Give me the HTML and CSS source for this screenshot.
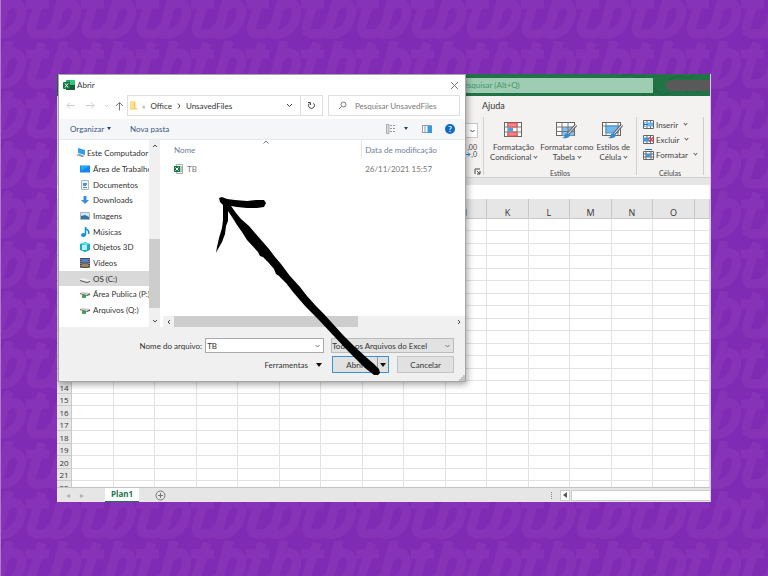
FILE: index.html
```html
<!DOCTYPE html>
<html lang="pt-BR">
<head>
<meta charset="utf-8">
<title>Abrir</title>
<link rel="stylesheet" href="styles.css">
</head>
<body>
<svg class="wallpaper" aria-hidden="true">
  <defs>
    <pattern id="tb" width="55" height="50" patternUnits="userSpaceOnUse" patternTransform="translate(24 -9)">
      <g fill="none" stroke="#8733b7" stroke-width="9">
        <path d="M17 2 L7 34 Q4 44 15 43 Q26 43 30 34 L39 0 M1 13 H24 M33 19 Q42 9 48 13 Q55 19 48 33 Q41 45 28 43 Q24 42 27 35"/>
        <path d="M-22 19 Q-13 9 -7 13 Q0 19 -7 33 Q-14 45 -27 43"/>
      </g>
    </pattern>
  </defs>
  <rect width="100%" height="100%" fill="url(#tb)"/>
</svg>
<main class="app">
  <header class="titlebar">
    <svg class="swirl" width="120" height="22" viewBox="0 0 120 22" fill="none" stroke="#1d663c" aria-hidden="true"><path d="M32 2q8-3 13 1h10M54 22q-2-7 5-9 6 0 9 6 4 4 12 0M62 22q1-5 7-5M78 6q8-5 15-3t12-3M96 18q6-4 14 0"/></svg>
    <input class="app-search" type="text" aria-label="Pesquisar" value="Pesquisar (Alt+Q)">
    <span class="account"></span>
  </header>
  <nav class="tabs"><a href="#ajuda">Ajuda</a></nav>
  <section class="ribbon">
    <div class="group number">
      <button class="combo" aria-label="Formato de número"><svg width="5" height="4" viewBox="0 0 5 4"><path d="M.5 1l2 2 2-2" class="dark"/></svg></button>
      <button class="decimals" aria-label="Diminuir casas decimais"><span>,00</span><span><svg width="6" height="5" viewBox="0 0 6 5"><path d="M0 2.500h5M3 .5l2 2-2 2" fill="none" stroke="#2184cf"/></svg>,0</span></button>
      <button class="launcher" aria-label="Mais opções"><svg width="7" height="7" viewBox="0 0 7 7"><path d="M1 6V1h5M3 3l3 3M6 3v3H3" class="dark"/></svg></button>
    </div>
    <div class="group styles">
      <div class="big-buttons">
        <button class="big"><svg width="19" height="18" viewBox="0 0 19 18"><rect x=".5" y="1.500" width="17" height="14" fill="#fff" stroke="#666"/><path d="M.5 6h17M.5 11h17M4 1.500v14M13 1.500v14" stroke="#777"/><path d="M4 2h9v4H4zM4 11h9v4H4z" fill="#ff8585" stroke="#e34d4d"/><path d="M4 6.500h5v4H4z" fill="#4aa3e8"/></svg><span>Formatação<br>Condicional <i></i></span></button>
        <button class="big"><svg width="22" height="18" viewBox="0 0 22 18"><rect x=".5" y="1.500" width="18" height="13" fill="#fff" stroke="#666"/><path d="M6 6h12v8.500H6z" fill="#83c0f1"/><path d="M.5 6h18M.5 10.500h18M6 1.500v13M12 1.500v13" stroke="#777"/><path d="M20 4l-8 9" stroke="#666" stroke-width="3"/><path d="M20 4l-8 9" stroke="#fff"/><path d="M6 17q3-1 3-4l3-1 2 2q-1 4-8 3z" fill="#318ad2"/></svg><span>Formatar como<br>Tabela <i></i></span></button>
        <button class="big"><svg width="22" height="18" viewBox="0 0 22 18"><rect x=".5" y="1.500" width="18" height="13" fill="#fff" stroke="#666"/><path d="M.5 5h18M4 1.500v13M16 1.500v13" stroke="#777"/><path d="M4 5h12v7H4z" fill="#72b7ed" stroke="#4793cf"/><path d="M20 4l-8 9" stroke="#666" stroke-width="3"/><path d="M20 4l-8 9" stroke="#fff"/><path d="M6 17q3-1 3-4l3-1 2 2q-1 4-8 3z" fill="#318ad2"/></svg><span>Estilos de<br>Célula <i></i></span></button>
      </div>
      <p>Estilos</p>
    </div>
    <div class="group cells">
      <button class="small"><svg width="11" height="11" viewBox="0 0 11 11"><path d="M.5 1.500h10v8H.5zM4 1.500v8M7.500 1.500v8" fill="#fff" stroke="#666"/><path d="M4 3.500h6v4H4z" fill="#67b4ef"/><path d="M5 5.500H0M2.500 3L0 5.500 2.500 8" fill="none" stroke="#1878c0"/></svg>Inserir <i></i></button>
      <button class="small"><svg width="11" height="11" viewBox="0 0 11 11"><path d="M.5 1.500h10v8H.5zM4 1.500v8M7.500 1.500v8" fill="#fff" stroke="#666"/><path d="M0 3.500h6v4H0z" fill="#3d99df"/><path d="M6 3.500l4 4M10 3.500l-4 4" stroke="#e83b3b" stroke-width="1.500"/></svg>Excluir <i></i></button>
      <button class="small"><svg width="11" height="11" viewBox="0 0 11 11"><path d="M.5 2.500h10v8H.5zM3 2.500v8M8 2.500v8M.5 5h10M.5 8h10" fill="#fff" stroke="#666"/><path d="M3 5h5v3H3z" fill="#3d99df"/><path d="M2 .5h7" stroke="#1878c0"/></svg>Formatar <i></i></button>
      <p>Células</p>
    </div>
  </section>
  <div class="formula"></div>
  <section class="sheet">
    <table>
      <colgroup><col class="head"><col class="c" span="15"><col></colgroup>
      <thead><tr><th></th><th>A</th><th>B</th><th>C</th><th>D</th><th>E</th><th>F</th><th>G</th><th>H</th><th>I</th><th>J</th><th>K</th><th>L</th><th>M</th><th>N</th><th>O</th><th></th></tr></thead>
      <tbody id="rows"></tbody>
    </table>
  </section>
  <footer class="sheetbar">
    <button class="step" aria-label="Anterior">◂</button>
    <button class="step" aria-label="Próxima">▸</button>
    <a class="sheet-tab" href="#plan1">Plan1</a>
    <button class="add" aria-label="Nova planilha"><svg width="11" height="11" viewBox="0 0 11 11"><circle cx="5.500" cy="5.500" r="4.500" class="line"/><path d="M5.500 3v5M3 5.500h5" class="line"/></svg></button>
    <div class="hscroll"><span class="grip"></span><button aria-label="Rolar"><svg width="4" height="6" viewBox="0 0 4 6"><path d="M4 0v6L0 3z" fill="#555"/></svg></button><span class="track"></span></div>
  </footer>

  <section class="dialog" role="dialog" aria-label="Abrir">
    <header class="dlg-title">
      <svg width="12" height="11" viewBox="0 0 12 11"><rect x="3" width="9" height="10" rx="1" fill="#21a366"/><path d="M7 0h5v5H7z" fill="#33c481"/><path d="M3 5h9v5H3z" fill="#185c37"/><rect y="2" width="7" height="7" rx="1" fill="#107c41"/><path d="M2 3.500l3 4M5 3.500l-3 4" stroke="#fff"/></svg>
      <span>Abrir</span>
      <button aria-label="Fechar"><svg width="9" height="9" viewBox="0 0 9 9"><path d="M1 1l7 7M8 1L1 8" class="line"/></svg></button>
    </header>
    <div class="nav">
      <button aria-label="Voltar"><svg width="10" height="9" viewBox="0 0 10 9"><path d="M9 4.500H1M4 1.500l-3 3 3 3" class="pale"/></svg></button>
      <button aria-label="Avançar"><svg width="10" height="9" viewBox="0 0 10 9"><path d="M1 4.500h8M6 1.500l3 3-3 3" class="pale"/></svg></button>
      <button aria-label="Recentes"><svg width="5" height="9" viewBox="0 0 5 9"><path d="M1 4l1.500 1.500L4 4" class="pale"/></svg></button>
      <button aria-label="Acima"><svg width="9" height="10" viewBox="0 0 9 10"><path d="M4.500 9.500v-8M1 5l3.500-3.500L8 5" class="line"/></svg></button>
      <div class="address">
        <svg width="7" height="9" viewBox="0 0 7 9"><path d="M0 .5h5.500V7H7v1.500H0z" fill="#f4c95e"/><path d="M0 .5h4v7H0z" fill="#ffe08c"/></svg>
        <span class="laquo">«</span><a href="#office">Office</a><svg width="4" height="6" viewBox="0 0 4 6"><path d="M1 .5L3 3 1 5.500" class="dark"/></svg><a href="#unsaved">UnsavedFiles</a>
        <button class="drop" aria-label="Locais anteriores"><svg width="7" height="5" viewBox="0 0 7 5"><path d="M1 1l2.500 2.500L6 1" class="dark"/></svg></button>
        <button class="reload" aria-label="Atualizar"><svg width="9" height="9" viewBox="0 0 9 9"><path d="M2.200 2.500A3 3 0 1 0 6.500 2.200M1 1.500h2.500V4" class="dark"/></svg></button>
      </div>
      <label class="find"><svg width="9" height="9" viewBox="0 0 9 9"><circle cx="5.500" cy="3.500" r="2.500" class="line"/><path d="M3.500 5.500L1 8" class="line"/></svg><input type="text" placeholder="Pesquisar UnsavedFiles"></label>
    </div>
    <div class="tools">
      <button>Organizar <i class="tri"></i></button>
      <button>Nova pasta</button>
      <button class="view" aria-label="Exibição"><svg width="10" height="10" viewBox="0 0 10 10"><path d="M.5 .5h2.500v9H.5z" fill="#ddd" stroke="#aaa"/><path d="M4 1.500h2M7 1.500h2M4 4.500h2M7 4.500h2M4 7.500h2M7 7.500h2" stroke="#999"/></svg><i class="tri"></i></button>
      <button aria-label="Painel"><svg width="10" height="8" viewBox="0 0 10 8"><path d="M.5 .5h9v7h-9zM3 1v6" fill="#fff" stroke="#8a9aab"/><path d="M5.500 1H10v7H5.500z" fill="#339be5"/></svg></button>
      <button class="help" aria-label="Ajuda">?</button>
    </div>
    <div class="browser">
      <ul class="tree">
        <li class="root"><svg width="10" height="10" viewBox="0 0 10 10"><path d="M2 0l7 2v5L2 5z" fill="#2e9fe8"/><path d="M0 7l3-1 6 2-3 1z" fill="#7f98ab"/></svg>Este Computador</li>
        <li><svg width="10" height="10" viewBox="0 0 10 10"><path d="M0 1.500h10v7H0z" fill="#1387ea"/><path d="M1 2h8L1 7z" fill="#29a9fb"/></svg>Área de Trabalho</li>
        <li><svg width="10" height="10" viewBox="0 0 10 10"><path d="M1.500 .5h7v9h-7z" fill="#eef3f7" stroke="#a9b6c1"/><path d="M3 3h3v3H3z" fill="#4798d6"/><path d="M3 7.500h4M6.500 3v2" stroke="#789"/></svg>Documentos</li>
        <li><svg width="10" height="10" viewBox="0 0 10 10"><path d="M3.500 1h3v4H9L5 9 1 5h2.500z" fill="#3490df"/></svg>Downloads</li>
        <li><svg width="10" height="10" viewBox="0 0 10 10"><path d="M.5 1.500h9v7h-9z" fill="#cfe6f7" stroke="#a9b6c1"/><path d="M1 5l4-1 4 2v2H1z" fill="#35739c"/></svg>Imagens</li>
        <li><svg width="10" height="10" viewBox="0 0 10 10"><ellipse cx="3.500" cy="8" rx="2.500" ry="2" fill="#1490df"/><path d="M5.500 8V0q0 2 2 3t1 4" fill="none" stroke="#1490df" stroke-width="1.500"/></svg>Músicas</li>
        <li><svg width="10" height="10" viewBox="0 0 10 10"><path d="M0 2l5-2 5 2v6l-5 2-5-2z" fill="#17a9c6"/><path d="M2 3h5v5H2z" fill="#b4f1f8"/><path d="M0 2l5-2 5 2-4 1z" fill="#66dbe9"/></svg>Objetos 3D</li>
        <li><svg width="10" height="10" viewBox="0 0 10 10"><path d="M0 0h10v10H0z" fill="#444d5c"/><path d="M2 1h6v3.500H2z" fill="#4e81d4"/><path d="M2 5.500h6V9H2z" fill="#a18252"/><path d="M1 1v9M9 1v9" stroke="#bbb" stroke-dasharray="1 1"/></svg>Vídeos</li>
        <li class="selected"><svg width="10" height="10" viewBox="0 0 10 10"><path d="M0 5l3-1 7 2v1L8 8 0 6z" fill="#eee"/><path d="M0 6l7 2 3-1v1L7 9 0 7z" fill="#555"/></svg>OS (C:)</li>
        <li><svg width="10" height="10" viewBox="0 0 10 10"><path d="M0 4l3-1 7 1-2 2z" fill="#ccc"/><path d="M0 4l7 2 3-2v2L7 7 0 5z" fill="#666"/><path d="M2 6h4v3H2z" fill="#45a753"/></svg>Área Publica (P:)</li>
        <li><svg width="10" height="10" viewBox="0 0 10 10"><path d="M0 4l3-1 7 1-2 2z" fill="#ccc"/><path d="M0 4l7 2 3-2v2L7 7 0 5z" fill="#666"/><path d="M2 6h4v3H2z" fill="#45a753"/></svg>Arquivos (Q:)</li>
        <li><svg width="10" height="10" viewBox="0 0 10 10"><path d="M0 9q0-3 3-2l2 2z" fill="#3b9fb5"/></svg></li>
      </ul>
      <div class="vbar"><svg width="6" height="5" viewBox="0 0 6 5"><path d="M1 4l2-2 2 2" class="dark"/></svg><span></span><svg width="6" height="5" viewBox="0 0 6 5"><path d="M1 1l2 2 2-2" class="dark"/></svg></div>
      <div class="files">
        <table>
          <thead><tr><th>Nome<svg width="6" height="4" viewBox="0 0 6 4"><path d="M.5 3.500L3 1l2.500 2.500" class="line"/></svg></th><th>Data de modificação</th></tr></thead>
          <tbody><tr><td><svg width="9" height="10" viewBox="0 0 9 10"><path d="M2.500 .5h6v9h-6z" fill="#fff" stroke="#aaa"/><path d="M6 3h2M6 5h2M6 7h2" stroke="#46a36e"/><path d="M0 2h6v6H0z" fill="#187a45"/><path d="M1.500 3.500l3 3M4.500 3.500l-3 3" stroke="#fff"/></svg>TB</td><td>26/11/2021 15:57</td></tr></tbody>
        </table>
        <div class="hbar"><svg width="5" height="6" viewBox="0 0 5 6"><path d="M4 1L2 3l2 2" class="dark"/></svg><span></span><svg width="5" height="6" viewBox="0 0 5 6"><path d="M1 1l2 2-2 2" class="dark"/></svg></div>
      </div>
    </div>
    <form class="actions">
      <div class="line-one">
        <label for="fname">Nome do arquivo:</label>
        <span class="field name"><input id="fname" type="text" value="TB"><svg width="5" height="4" viewBox="0 0 5 4"><path d="M.5 1l2 2 2-2" class="line"/></svg></span>
        <span class="field type"><select aria-label="Tipo"><option>Todos os Arquivos do Excel</option></select><svg width="5" height="4" viewBox="0 0 5 4"><path d="M.5 1l2 2 2-2" class="line"/></svg></span>
      </div>
      <div class="line-two">
        <button type="button" class="plain">Ferramentas <i class="tri"></i></button>
        <span class="split"><button type="button">Abrir</button><button type="button" aria-label="Opções de abrir"><i class="tri"></i></button></span>
        <button type="button" class="cancel">Cancelar</button>
      </div>
      <svg class="corner" width="6" height="6" viewBox="0 0 6 6"><path d="M4 0h2v6H0V4h2V2h2z" fill="#c4c4c4"/></svg>
    </form>
  </section>
  <svg class="arrow" width="175" height="190" viewBox="210 190 175 190" aria-hidden="true"><path d="M219 198L222 197 227 199 235 200 247 201 256 200 264 200 266 203 264 207 257 208 247 208 237 207 231 206 236 213 241 219 249 226 255 233 262 241 269 249 275 257 281 264 290 276 300 287 307 296 316 306 323 313 333 324 343 335 354 346 367 358 374 364 379 369 380 373 378 375 374 375 365 368 356 359 347 350 332 334 317 318 305 306 293 292 286 283 279 276 276 274 274 269 268 262 263 257 260 256 258 252 247 240 242 232 237 225 232 217 228 211 228 221 226 226 225 234 222 242 218 249 216 253 217 247 219 238 222 228 223 220 223 210 223 205 220 202z"/></svg>
</main>
<script src="rows.js"></script>
</body>
</html>
```
FILE: styles.css
```css
* { box-sizing: border-box; }
body {
  margin: 0;
  padding: 74px 57px;
  height: 100vh;
  background: #802bb3;
  font: 8px/12px Lato, "Open Sans", sans-serif;
  color: #333;
}
button, input, select { font: inherit; color: inherit; border: 0; margin: 0; padding: 0; background: none; border-radius: 0; }
a { color: inherit; text-decoration: none; }
p, ul { margin: 0; padding: 0; }
svg { display: block; flex: none; }
.line { fill: none; stroke: #777; }
.dark { fill: none; stroke: #444; }
.pale { fill: none; stroke: #ccc; }
.wallpaper { position: absolute; inset: 0; width: 100%; height: 100%; z-index: -1; border-left: 1px solid #ae7ccc; }

.app { position: relative; display: flex; flex-direction: column; height: 100%; overflow: hidden; background: #f3f2f1; border-right: 1px solid #d9c7e5; }

.titlebar { position: relative; display: flex; justify-content: flex-end; align-items: center; flex: none; height: 22px; background: #217346; }
.swirl { position: absolute; right: 0; top: 0; }
.app-search { position: relative; width: 194px; height: 15px; background: #9fcdb3; color: #43976a; }
.account { position: relative; width: 44px; height: 11px; margin-left: 13px; border-radius: 6px 0 0 6px; background: #595959; }

.tabs { flex: none; height: 21px; padding: 4px 0 0 425px; font-size: 9px; }
.ribbon { display: flex; justify-content: flex-end; flex: none; height: 61px; padding-right: 6px; border-bottom: 1px solid #d0d0d0; color: #444; }
.group { position: relative; height: 58px; border-right: 1px solid #d0cfce; }
.group p { position: absolute; left: 0; right: 0; bottom: -3px; text-align: center; font-size: 7px; line-height: 10px; }
.group i { display: inline-block; width: 3px; height: 3px; margin: 0 0 2px 1px; border: solid #666; border-width: 0 1px 1px 0; transform: rotate(45deg); }
.number { width: 60px; display: flex; flex-direction: column; align-items: flex-end; }
.combo { display: flex; align-items: center; justify-content: flex-end; width: 50px; height: 15px; margin: 6px 5px 0 0; padding-right: 2px; background: #fff; border: 1px solid #c8c8c8; }
.decimals { margin: 6px 6px 0 0; font-size: 7px; line-height: 7px; }
.decimals span { display: flex; justify-content: flex-end; align-items: center; }
.launcher { margin: auto 2px 0 0; }
.styles { width: 153px; }
.big-buttons { display: flex; gap: 3px; padding: 4px 0 0 6px; }
.big { display: flex; flex-direction: column; align-items: center; line-height: 10px; white-space: nowrap; }
.big span { margin-top: 3px; }
.cells { width: 67px; padding: 0 0 0 6px; }
.small { display: flex; align-items: center; gap: 2px; height: 15px; }
.small i { margin-left: 4px; }

.formula { flex: none; height: 21px; background: #fff; border-top: 7px solid #e6e6e6; }
.sheet { flex: 1; overflow: hidden; background: #fff; }
.sheet table { width: 100%; table-layout: fixed; border-spacing: 0; }
.sheet col.head { width: 15px; }
.sheet col.c { width: 6.36%; }
.sheet th, .sheet td { padding: 0; border: solid #e2e2e2; border-width: 0 1px 1px 0; overflow: hidden; }
.sheet th { background: #e6e6e6; border-color: #c9c9c9; font: 8px/11px "Open Sans", sans-serif; color: #333; }
.sheet thead th { height: 20px; padding-top: 7px; font-size: 9px; }
.sheet tbody tr { height: 12px; }
.sheet tbody tr:nth-child(even) { height: 13px; }

.sheetbar { display: flex; align-items: center; flex: none; height: 15px; background: #e6e6e6; border-top: 1px solid #c3c3c3; }
.step { width: 14px; color: #b0b0b0; line-height: 12px; }
.step:first-child { margin-left: 4px; }
.sheet-tab { width: 34px; height: 14px; margin-left: 16px; background: #fff; border-bottom: 1px solid #217346; color: #217346; font-family: "Open Sans", sans-serif; font-weight: 700; text-align: center; }
.add { margin-left: 16px; }
.hscroll { display: flex; align-items: center; gap: 1px; width: 159px; height: 11px; margin-left: auto; }
.hscroll button { display: flex; align-items: center; justify-content: center; width: 10px; height: 11px; background: #fff; border: 1px solid #ccc; }
.grip { height: 7px; margin-right: 7px; border-left: 1px dotted #888; }
.track { flex: 1; height: 11px; background: #fff; border: solid #ccc; border-width: 1px 0 1px 1px; }

.dialog { position: absolute; left: 1px; top: 0; width: 62.500%; background: #fff; border: 1px solid #a5a5a5; box-shadow: 1px 2px 7px rgba(0,0,0,.4); }
.dlg-title { display: flex; align-items: center; gap: 2px; height: 20px; padding: 0 6px 0 4px; }
.dlg-title button { margin-left: auto; }
.nav { display: flex; align-items: center; height: 24px; padding: 0 5px 3px 7px; }
.nav > button { margin-right: 9px; }
.nav > button:nth-child(3) { margin-right: 6px; }
.nav > button:nth-child(4) { margin-right: 3px; }
.address { display: flex; align-items: center; gap: 5px; flex: 201 0 0; height: 21px; padding-left: 2px; border: 1px solid #dedede; }
.laquo { color: #888; }
.drop { margin-left: auto; padding-right: 2px; }
.reload { display: flex; align-items: center; justify-content: center; width: 22px; height: 19px; border-left: 1px solid #dedede; }
.find { display: flex; align-items: center; gap: 8px; flex: 127 0 0; height: 21px; margin-left: 5px; padding-left: 9px; border: 1px solid #dedede; }
.find input { flex: 1; min-width: 0; }
.find input::placeholder { color: #777; opacity: 1; }
.tools { display: flex; align-items: center; height: 21px; padding: 0 10px 0 11px; background: #f4f6f8; border-bottom: 1px solid #e6e9ec; color: #3f567b; }
.tools button { margin-right: 19px; }
.tools .view { display: flex; align-items: center; gap: 7px; margin: 0 14px 0 auto; }
.tools .view + button { margin-right: 13px; }
.tri { display: inline-block; border: solid transparent; border-width: 3px 2px 0; border-top-color: #26426f; margin: 0 0 2px 1px; }
.tools .help { width: 10px; height: 10px; margin: 0; border-radius: 50%; background: #0b69c7; color: #fff; font-weight: 700; line-height: 10px; }
.browser { display: flex; height: 187px; }
.tree { width: 90px; padding-top: 5px; list-style: none; overflow: hidden; white-space: nowrap; }
.tree li { display: flex; align-items: center; gap: 3px; height: 16px; padding-left: 21px; }
.tree li:nth-child(3n) { height: 15px; }
.tree .root { padding-left: 17px; gap: 1px; }
.tree .selected { background: #d9d9d9; }
.vbar { display: flex; flex-direction: column; align-items: center; justify-content: space-between; width: 11px; padding: 3px 0; background: #f0f0f0; }
.vbar span { width: 11px; height: 69px; margin-top: 79px; background: #cdcdcd; }
.files { flex: 1; display: flex; flex-direction: column; padding-left: 3px; }
.files table { table-layout: fixed; width: 100%; border-spacing: 0; color: #777; }
.files th { position: relative; height: 19px; padding: 0 0 0 11px; font-weight: 400; text-align: left; color: #6b7f9b; }
.files th:last-child { width: 104px; padding-left: 3px; border-left: 1px solid #e5e5e5; }
.files th svg { position: absolute; right: 92px; top: 0; }
.files td { height: 20px; padding: 0 0 0 11px; }
.files td svg { display: inline-block; vertical-align: -2px; margin-right: 4px; }
.files td:last-child { padding-left: 4px; }
.hbar { display: flex; align-items: center; gap: 3px; height: 11px; margin-top: auto; padding: 0 3px; background: #f0f0f0; }
.hbar svg:last-child { margin-left: auto; }
.hbar span { width: 62%; height: 11px; background: #cdcdcd; }
.actions { position: relative; padding: 11px 11px 8px; background: #f0f0f0; }
.line-one, .line-two { display: flex; align-items: center; justify-content: flex-end; }
.line-two { margin-top: 3px; }
.field { position: relative; display: flex; height: 15px; background: #fff; border: 1px solid #aaa; }
.field svg { position: absolute; right: 3px; top: 5px; }
.field input { flex: 1; min-width: 0; padding-left: 1px; }
.field select { flex: 1; min-width: 0; appearance: none; }
.name { width: 119px; margin-left: 3px; }
.type { width: 123px; margin-left: 7px; background: #e2e2e2; border-color: #bbb; }
.line-two button { height: 17px; }
.actions .tri { border-width: 4px 3px 0; border-top-color: #111; margin: 0 0 1px 6px; }
.split { display: flex; width: 57px; margin-left: 10px; background: #e1e1e1; border: 1px solid #3a91d6; }
.line-two .split button { flex: 1; height: 15px; }
.line-two .split button + button { flex: none; width: 11px; border-left: 1px solid #999; }
.actions .split .tri { margin: 0 0 1px; }
.line-two .cancel { width: 57px; margin-left: 8px; background: #e1e1e1; border: 1px solid #c4c4c4; }
.corner { position: absolute; right: 0; bottom: 0; }
.arrow { position: absolute; left: 153px; top: 116px; fill: #000; pointer-events: none; }
```
FILE: rows.js
```js
const body = document.getElementById("rows");
for (let n = 1; n <= 22; n++) {
  const row = body.insertRow();
  const head = document.createElement("th");
  head.textContent = n;
  row.append(head);
  for (let c = 0; c < 16; c++) row.insertCell();
}
```
